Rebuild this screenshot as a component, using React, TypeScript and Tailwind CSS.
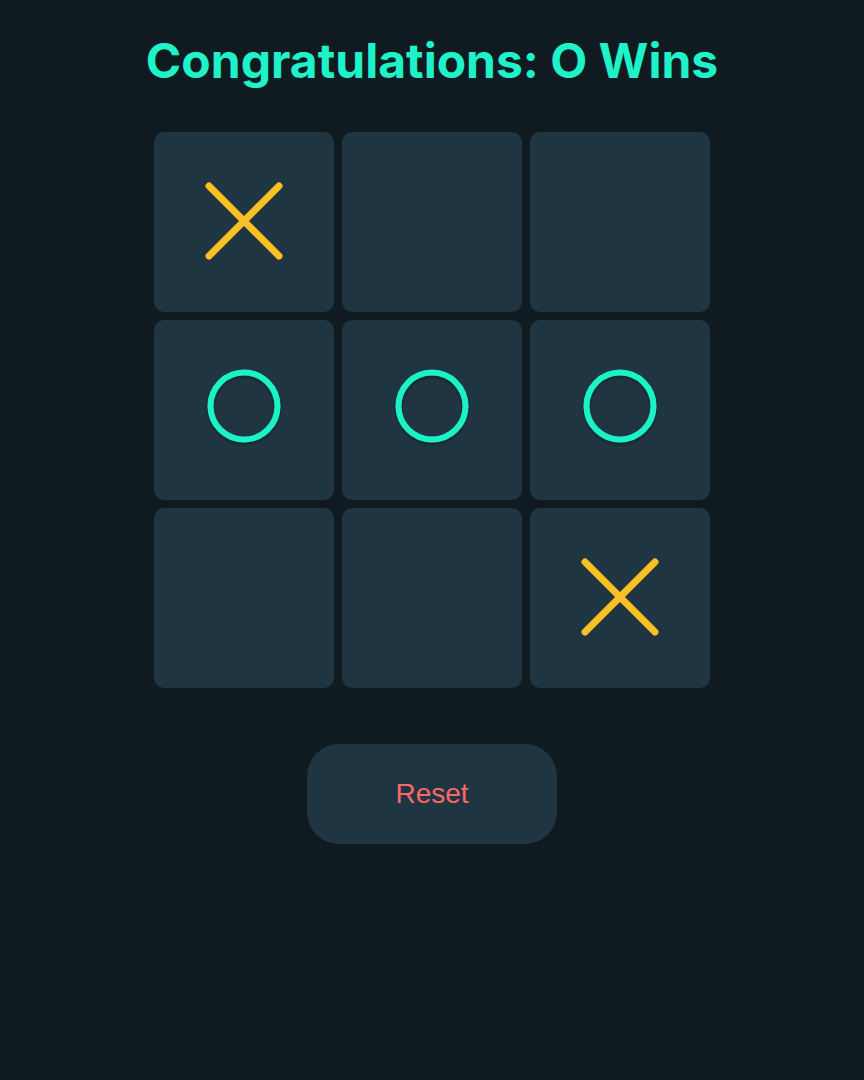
export default function App() {
  const board = ["X", "", "", "O", "O", "O", "", "", "X"];

  return (
    <div className="min-h-[1080px] w-full bg-[#101b21] flex flex-col items-center pt-[37px]">
      <h1 className="text-[48px] leading-[48px] font-bold text-[#1ff2c8] font-[Inter,sans-serif]">
        Congratulations: O Wins
      </h1>

      <div className="mt-[47px] grid grid-cols-3 gap-2">
        {board.map((cell, i) => (
          <div
            key={i}
            className="w-[180px] h-[180px] rounded-[10px] bg-[#1f3541] flex items-center justify-center"
          >
            {cell === "X" && (
              <svg width="80" height="80" viewBox="0 0 80 80" className="-mt-[2px]">
                <path
                  d="M5 5 L75 75 M75 5 L5 75"
                  stroke="#fcbf24"
                  strokeWidth="7"
                  strokeLinecap="round"
                  fill="none"
                />
              </svg>
            )}
            {cell === "O" && (
              <svg width="80" height="80" viewBox="0 0 80 80" className="-mt-2">
                <defs>
                  <filter id={`sh${i}`} x="-20%" y="-20%" width="140%" height="150%">
                    <feDropShadow dx="0" dy="2" stdDeviation="1.5" floodColor="#000" floodOpacity="0.35" />
                  </filter>
                </defs>
                <circle
                  cx="40"
                  cy="40"
                  r="33.5"
                  stroke="#1ff2c8"
                  strokeWidth="6"
                  fill="none"
                  filter={`url(#sh${i})`}
                />
              </svg>
            )}
          </div>
        ))}
      </div>

      <button className="mt-[56px] w-[250px] h-[100px] rounded-[32px] bg-[#1f3541] text-[#fd6868] text-[28px] font-[Liberation_Sans,Arial,sans-serif]">
        Reset
      </button>
    </div>
  );
}
